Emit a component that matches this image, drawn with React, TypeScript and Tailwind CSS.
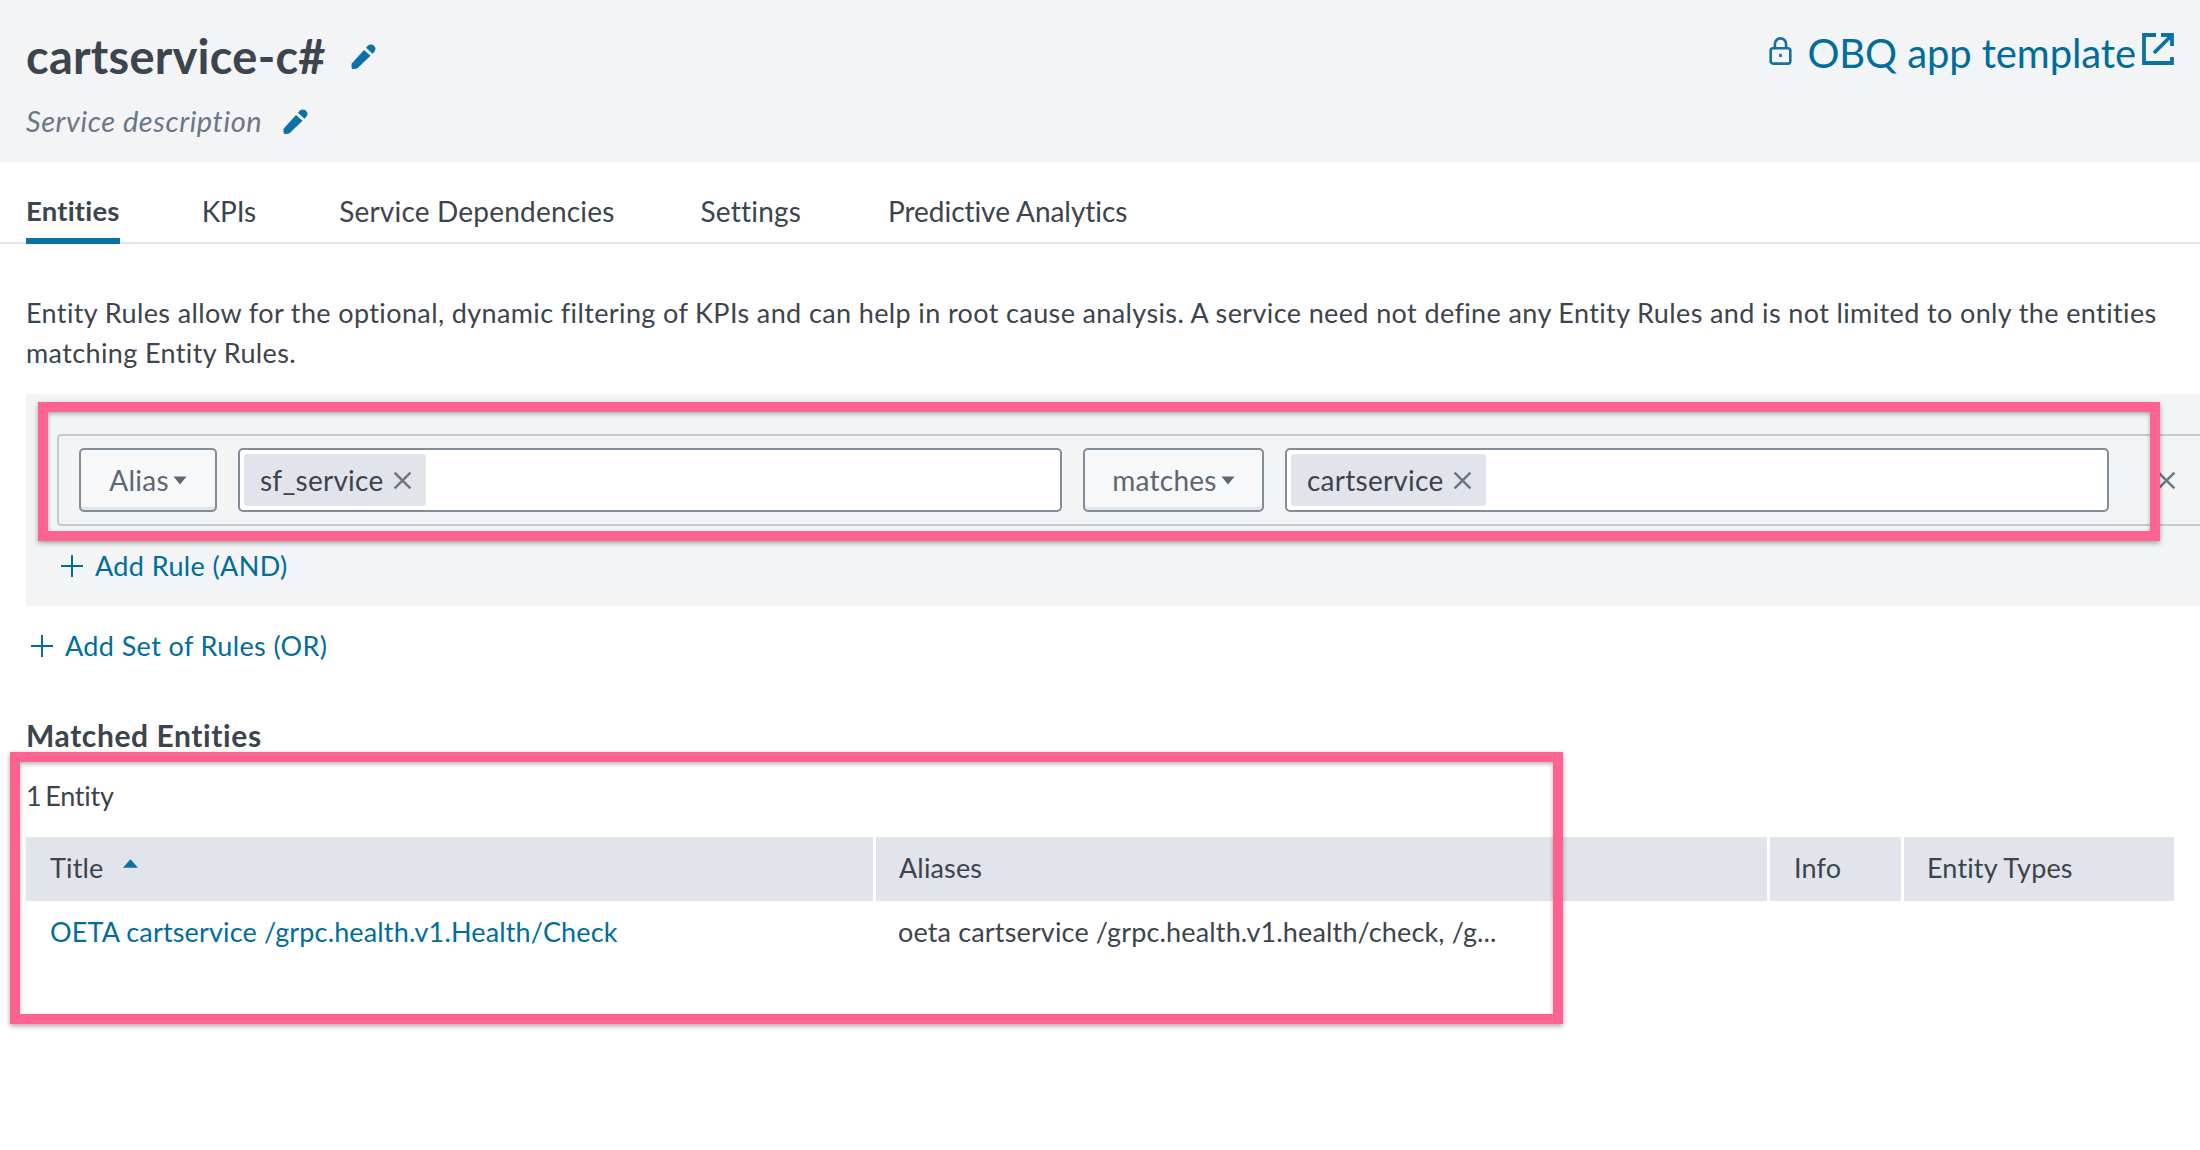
import React from "react";

const Pencil = ({ className }: { className: string }) => (
  <svg viewBox="0 0 25 25" className={className} fill="#0a72a8">
    <path d="M0.800 19.500 L13 6 L19.500 11.800 L6.500 24.200 Q3 25.500 1 24.800 Q0 22 0.800 19.500 Z" />
    <path d="M15 3.800 L17 1.500 Q20 -0.800 23 1.800 Q25.800 4.500 23.500 7.500 L21.500 9.800 Z" />
  </svg>
);

const Plus = () => (
  <svg viewBox="0 0 22 22" className="w-[22px] h-[22px]" stroke="#006d9c" strokeWidth="2" fill="none">
    <path d="M11 0V22M0 11H22" />
  </svg>
);

const Cross = ({ className = "w-[19px] h-[19px]" }: { className?: string }) => (
  <svg viewBox="0 0 18 18" className={className} stroke="#6b7785" strokeWidth="2.400" fill="none">
    <path d="M1.500 1.500L16.500 16.500M16.500 1.500L1.500 16.500" />
  </svg>
);

const Caret = () => (
  <svg viewBox="0 0 14 9" className="w-[14px] h-[9px]" fill="#5c6773">
    <path d="M0.500 0.500H13.500L7 8.500Z" />
  </svg>
);

const Chip = ({ label }: { label: string }) => (
  <div className="h-[52px] flex items-center pl-[16px] pr-[14px] bg-[#e1e4ea] rounded-[3px] gap-[10px] text-[#3c444d] text-[28px] tracking-[0.25px]">
    <span>{label}</span>
    <Cross />
  </div>
);

const Select = ({ label, width }: { label: string; width: string }) => (
  <div className={`${width} h-[64px] shrink-0 flex items-center justify-center gap-[4px] bg-[#f7f8fa] border-2 border-[#818d99] rounded-[5px] text-[#5c6773] text-[28px] tracking-[0.25px] shadow-[inset_0_-3px_0_#e1e4ea]`}>
    <span>{label}</span>
    <Caret />
  </div>
);

const Field = ({ label }: { label: string }) => (
  <div className="w-[824px] h-[64px] shrink-0 flex items-center pl-[4px] bg-white border-2 border-[#818d99] rounded-[5px]">
    <Chip label={label} />
  </div>
);

const Highlight = ({ className }: { className: string }) => (
  <div className={`absolute border-[10px] border-[#fd6290] shadow-[0_2px_5px_rgba(0,0,0,0.35),inset_0_2px_4px_rgba(0,0,0,0.3)] pointer-events-none ${className}`} />
);

export default function App() {
  return (
    <div
      className="relative w-[2200px] h-[1150px] overflow-hidden bg-white text-[#3c444d] text-[27px] leading-[40px] tracking-[0.38px] [font-variant-ligatures:none]"
      style={{ fontFamily: "Lato, 'Liberation Sans', sans-serif" }}
    >
      <header className="h-[162px] bg-[#f2f4f5] pl-[26px] pr-[26px] flex justify-between">
        <div>
          <div className="flex items-center h-[56px] mt-[28px]">
            <h1 className="text-[47px] leading-[56px] font-bold tracking-[0.25px]">cartservice-c#</h1>
            <Pencil className="w-[25px] h-[25px] ml-[25px]" />
          </div>
          <div className="flex items-center h-[40px] mt-[17px]">
            <span className="italic text-[#6b7785] text-[29px] tracking-[0.55px]">Service description</span>
            <Pencil className="w-[25px] h-[25px] ml-[21px]" />
          </div>
        </div>
        <div className="flex items-start pt-[33px] text-[#006d9c]">
          <svg viewBox="0 0 24 30" className="w-[23px] h-[28px] mt-[4px] mr-[15px]" fill="none" stroke="#1a6f9c" strokeWidth="2.800">
            <rect x="1.500" y="12" width="21" height="16.500" rx="2.500" />
            <path d="M6 12V7.500a6 6 0 0 1 12 0V12" />
            <path d="M12 18v3.500" />
          </svg>
          <span className="text-[40px] leading-[40px] tracking-[-0.1px]">OBQ app template</span>
          <svg viewBox="0 0 32 32" className="w-[32px] h-[32px] ml-[6px]" fill="none" stroke="#0a72a8" strokeWidth="3.800">
            <path d="M14 2H2V30H30V24" />
            <path d="M19 2H30V13M30 2L12 20" />
          </svg>
        </div>
      </header>

      <nav className="h-[82px] pl-[26px] flex items-start border-b-2 border-[#e1e6eb] text-[28px] tracking-[0.2px]">
        <div className="h-[82px] pt-[29px] leading-[40px] font-bold border-b-[6px] border-[#0a72a8] text-[27.500px]">Entities</div>
        <div className="pt-[29px] ml-[82px] tracking-[-0.1px]">KPIs</div>
        <div className="pt-[29px] ml-[83px]">Service Dependencies</div>
        <div className="pt-[29px] ml-[86px]">Settings</div>
        <div className="pt-[29px] ml-[87px] tracking-[-0.05px]">Predictive Analytics</div>
      </nav>

      <p className="mt-[49px] ml-[26px]">
        Entity Rules allow for the optional, dynamic filtering of KPIs and can help in root cause analysis. A service need not define any Entity Rules and is not limited to only the entities
        <br />
        matching Entity Rules.
      </p>

      <section className="ml-[26px] mt-[21px] h-[212px] bg-[#f2f4f5] overflow-hidden pt-[40px]">
        <div className="ml-[31px] w-[2300px] h-[92px] border-2 border-[#c3cbd4] rounded-[4px] flex items-center pl-[20px] gap-[21px]">
          <Select label="Alias" width="w-[138px]" />
          <Field label="sf_service" />
          <Select label="matches" width="w-[181px]" />
          <Field label="cartservice" />
          <div className="ml-[27px]">
            <Cross />
          </div>
        </div>
        <div className="ml-[35px] mt-[20px] flex items-center gap-[12px] text-[#006d9c]">
          <Plus />
          <span>Add Rule (AND)</span>
        </div>
      </section>

      <div className="ml-[31px] mt-[20px] flex items-center gap-[12px] text-[#006d9c]">
        <Plus />
        <span>Add Set of Rules (OR)</span>
      </div>

      <h2 className="ml-[26px] mt-[49px] text-[30px] leading-[40px] font-bold tracking-[0.6px]">Matched Entities</h2>

      <div className="ml-[26px] mt-[21px] [word-spacing:-3px] tracking-[-0.2px]">1 Entity</div>

      <div className="ml-[26px] mt-[21px] w-[2148px] flex flex-col">
        <div className="h-[64px] flex gap-[3px] tracking-[0.15px]">
          <div className="w-[847px] bg-[#e1e4ea] pl-[24px] pb-[2px] flex items-center gap-[20px]">
            <span>Title</span>
            <svg viewBox="0 0 14 8" className="w-[15px] h-[9px] mb-[10px]" fill="#0a72a8">
              <path d="M7 0L14 8H0Z" />
            </svg>
          </div>
          <div className="w-[891px] bg-[#e1e4ea] pl-[23px] pb-[2px] flex items-center">Aliases</div>
          <div className="w-[131px] bg-[#e1e4ea] pl-[24px] pb-[2px] flex items-center">Info</div>
          <div className="flex-1 bg-[#e1e4ea] pl-[23px] pb-[2px] flex items-center">Entity Types</div>
        </div>
        <div className="flex h-[62px] items-center tracking-[0.15px]">
          <div className="w-[850px] pl-[24px] text-[#006d9c]">OETA cartservice /grpc.health.v1.Health/Check</div>
          <div className="pl-[22px]">oeta cartservice /grpc.health.v1.health/check, /g...</div>
        </div>
      </div>

      <Highlight className="left-[38px] top-[402px] w-[2122px] h-[139px]" />
      <Highlight className="left-[10px] top-[752px] w-[1553px] h-[272px]" />
    </div>
  );
}
